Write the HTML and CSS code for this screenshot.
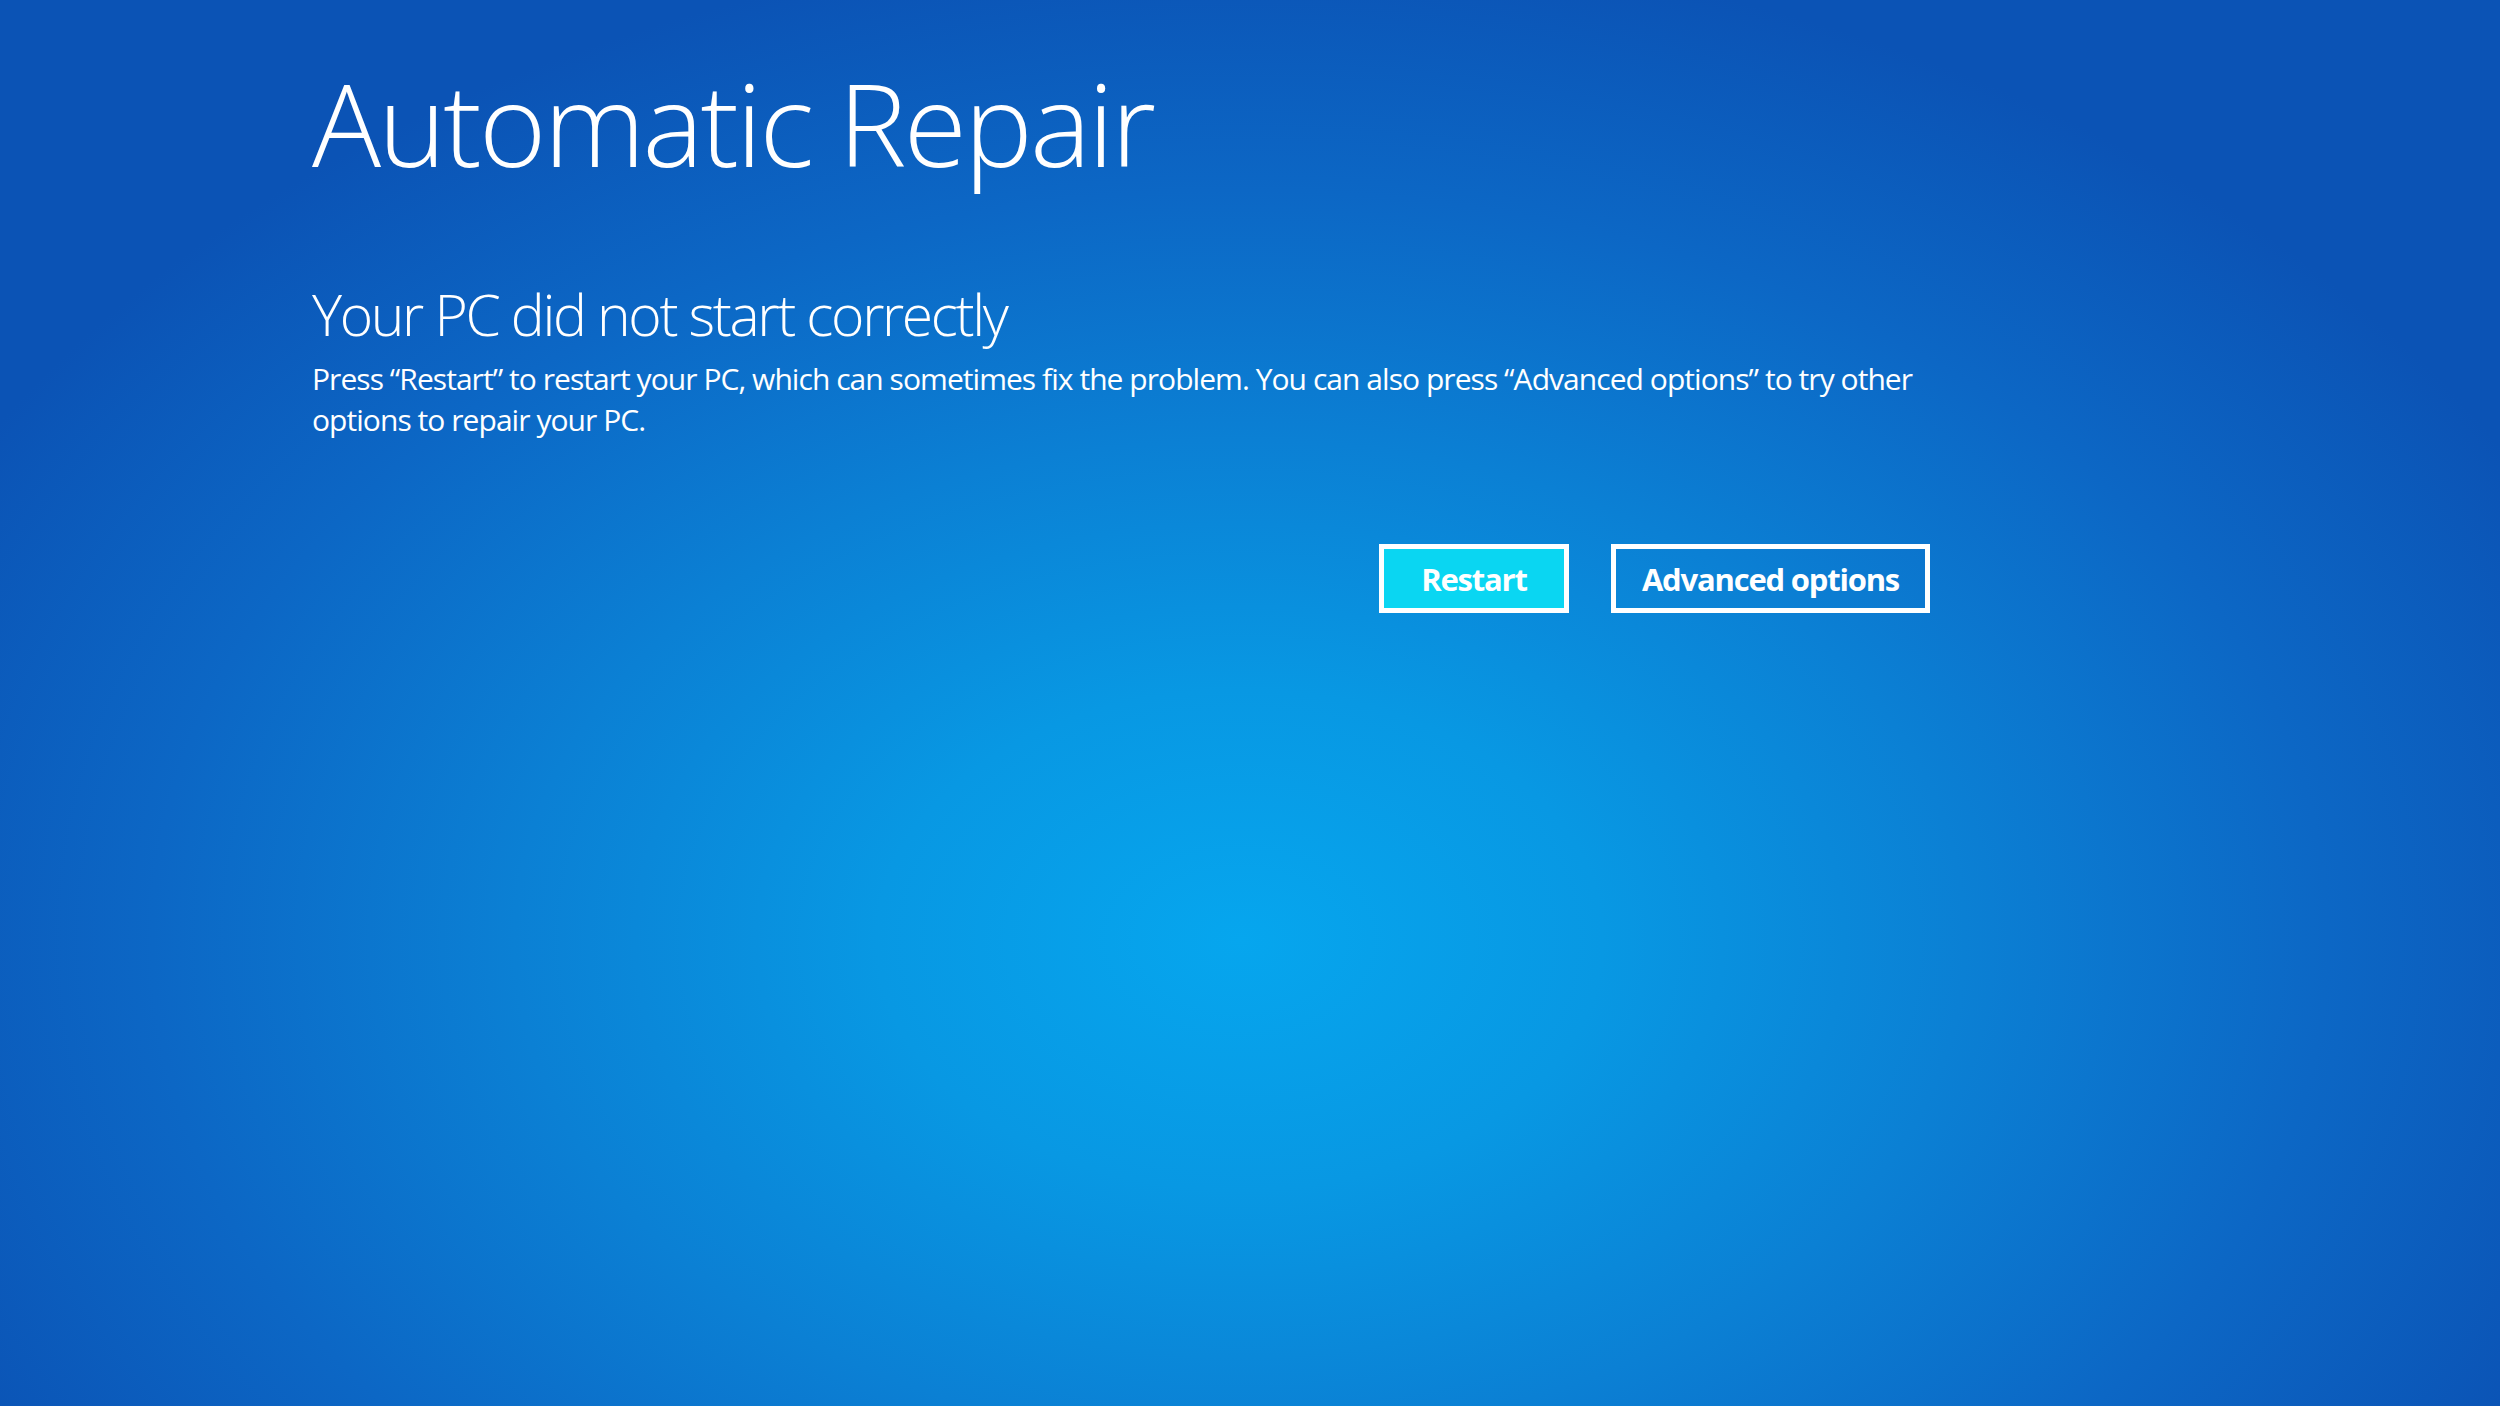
FILE: index.html
```html
<!DOCTYPE html>
<html lang="en">
<head>
<meta charset="utf-8">
<title>Automatic Repair</title>
<link rel="stylesheet" href="styles.css">
</head>
<body>
<main class="screen">
  <div class="content">
    <h1 class="title">Automatic Repair</h1>
    <h2 class="subtitle">Your PC did not start correctly</h2>
    <p class="message">Press “Restart” to restart your PC, which can sometimes fix the problem. You can also press “Advanced options” to try other options to repair your PC.</p>
    <div class="actions">
      <button class="btn btn-primary" type="button">Restart</button>
      <button class="btn btn-secondary" type="button">Advanced options</button>
    </div>
  </div>
</main>
</body>
</html>
```

FILE: styles.css
```css
html, body {
  margin: 0;
  padding: 0;
  width: 100%;
  height: 100%;
}

body {
  font-family: "Open Sans", "Noto Sans", "Liberation Sans", sans-serif;
  color: #ffffff;
  overflow: hidden;
}

.screen {
  width: 2500px;
  height: 1406px;
  box-sizing: border-box;
  padding: 65px 0 0 312px;
  background:
    radial-gradient(ellipse 1450px 1000px at 1240px 940px,
      #06a6ee 0%,
      #0898e3 25%,
      #0b80d4 50%,
      #0c67c5 75%,
      #0b53b5 100%);
}

.content {
  width: 1618px;
  display: flex;
  flex-direction: column;
}

.title {
  margin: 0;
  font-size: 115px;
  line-height: 115px;
  font-weight: 300;
  letter-spacing: -2.8px;
}

.subtitle {
  margin: 106px 0 0 0;
  font-size: 57px;
  line-height: 57px;
  font-weight: 300;
  letter-spacing: -2.35px;
}

.message {
  margin: 15px 0 0 0;
  font-size: 30px;
  line-height: 41px;
  font-weight: 400;
  letter-spacing: -0.95px;
}

.actions {
  margin-top: 104px;
  display: flex;
  justify-content: flex-end;
  gap: 42px;
}

.btn {
  box-sizing: border-box;
  height: 69px;
  border: 5px solid #ffffff;
  color: #ffffff;
  font-family: "Open Sans", "Noto Sans", "Liberation Sans", sans-serif;
  font-size: 31px;
  font-weight: 700;
  letter-spacing: -1.2px;
  padding: 0;
  display: flex;
  align-items: center;
  justify-content: center;
}

.btn-primary {
  width: 190px;
  background: #0ad6f2;
}

.btn-secondary {
  width: 319px;
  background: transparent;
}
```
